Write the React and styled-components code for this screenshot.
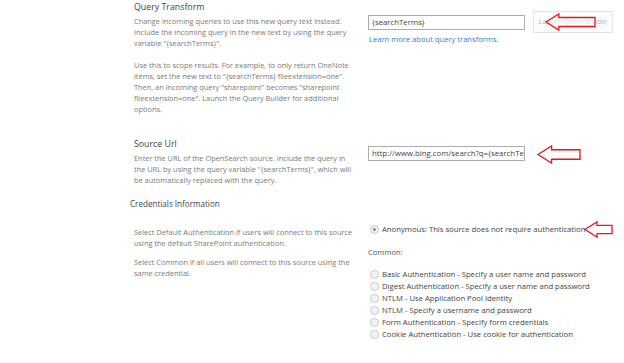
import React from "react";
import styled, { createGlobalStyle } from "styled-components";

const GlobalStyle = createGlobalStyle`
  html, body {
    margin: 0;
    padding: 0;
    background: #ffffff;
  }
  body {
    font-family: "Open Sans", "Noto Sans", "Liberation Sans", sans-serif;
  }
`;

const Page = styled.div`
  position: relative;
  width: 624px;
  height: 363px;
  overflow: hidden;
  padding-left: 130px;
  box-sizing: border-box;
`;

const Section = styled.div`
  display: flex;
  padding-top: ${(p) => p.$top || 0}px;
`;

const Left = styled.div`
  width: 238px;
  padding-left: 4px;
  padding-right: 10px;
  padding-top: ${(p) => p.$top || 0}px;
  box-sizing: border-box;
  flex-shrink: 0;
`;

const Right = styled.div`
  padding-top: ${(p) => p.$top || 0}px;
  display: flex;
  flex-direction: column;
`;

const Heading = styled.div`
  font-size: ${(p) => p.$size || 8.8}px;
  line-height: 12px;
  color: #444444;
  margin-top: ${(p) => p.$mt || 0}px;
  margin-bottom: ${(p) => p.$gap || 3}px;
`;

const Desc = styled.p`
  margin: 0 0 ${(p) => p.$gap ?? 11}px 0;
  font-size: 7.4px;
  line-height: ${(p) => p.$lh || 11}px;
  color: #7a7a7a;
`;

const InputRow = styled.div`
  display: flex;
  align-items: center;
  gap: 8px;
`;

const TextBox = styled.div`
  width: 157px;
  height: 15px;
  box-sizing: border-box;
  border: 1px solid #ababab;
  font-size: 7.8px;
  line-height: 13px;
  padding: 0 3px;
  color: #444444;
  white-space: nowrap;
  overflow: hidden;
`;

const Button = styled.div`
  width: 80px;
  height: 22px;
  box-sizing: border-box;
  border: 1px solid #e3e3e3;
  background: #fdfdfd;
  font-size: 6.8px;
  line-height: 20px;
  text-align: center;
  color: #b8b8b8;
`;

const Link = styled.div`
  font-size: 7.6px;
  line-height: 11px;
  color: #2d7fc4;
  margin-top: 1px;
  padding-left: 1px;
`;

const RadioRow = styled.label`
  display: flex;
  align-items: center;
  gap: 3px;
  height: 12px;
  font-size: 7.7px;
  color: #444444;
  padding-left: 2px;
  white-space: nowrap;
`;

const Radio = styled.span`
  width: 7px;
  height: 7px;
  border-radius: 50%;
  border: 1px solid #c8c8c8;
  background: #f3f3f3;
  display: inline-flex;
  align-items: center;
  justify-content: center;
  flex-shrink: 0;
  &::after {
    content: "";
    width: 3px;
    height: 3px;
    border-radius: 50%;
    background: ${(p) => (p.$checked ? "#8a8a8a" : "transparent")};
  }
`;

const Common = styled.div`
  font-size: 7.6px;
  line-height: 12px;
  color: #555555;
  margin: 11px 0 10px 0;
`;

const Arrow = styled.svg`
  position: absolute;
  left: ${(p) => p.$x}px;
  top: ${(p) => p.$y}px;
  overflow: visible;
`;

const RedArrow = ({ x, y, w, h }) => {
  const head = h * 0.8;
  const shaft = h * 0.28;
  const mid = h / 2;
  const points = [
    [0, mid],
    [head, 0],
    [head, mid - shaft],
    [w, mid - shaft],
    [w, mid + shaft],
    [head, mid + shaft],
    [head, h],
  ]
    .map((pt) => pt.join(","))
    .join(" ");
  return (
    <Arrow $x={x} $y={y} width={w} height={h} viewBox={`0 0 ${w} ${h}`}>
      <polygon points={points} fill="#ffffff" fillOpacity="0.6" stroke="#e8141b" strokeWidth="1.3" />
    </Arrow>
  );
};

const authOptions = [
  "Basic Authentication - Specify a user name and password",
  "Digest Authentication - Specify a user name and password",
  "NTLM - Use Application Pool Identity",
  "NTLM - Specify a username and password",
  "Form Authentication - Specify form credentials",
  "Cookie Authentication - Use cookie for authentication",
];

const App = () => {
  return (
    <>
      <GlobalStyle />
      <Page>
        <Section $top={1}>
          <Left>
            <Heading>Query Transform</Heading>
            <Desc>
              Change incoming queries to use this new query text instead.
              Include the incoming query in the new text by using the query
              variable "{"{searchTerms}"}".
            </Desc>
            <Desc>
              Use this to scope results. For example, to only return OneNote
              items, set the new text to "{"{searchTerms}"} fileextension=one".
              Then, an incoming query "sharepoint" becomes "sharepoint
              fileextension=one". Launch the Query Builder for additional
              options.
            </Desc>
          </Left>
          <Right $top={10}>
            <InputRow>
              <TextBox>{"{searchTerms}"}</TextBox>
              <Button>Launch Query Builder</Button>
            </InputRow>
            <Link>Learn more about query transforms.</Link>
          </Right>
        </Section>

        <Section $top={12}>
          <Left>
            <Heading>Source Url</Heading>
            <Desc $gap={0}>
              Enter the URL of the OpenSearch source. Include the query in the
              URL by using the query variable "{"{searchTerms}"}", which will
              be automatically replaced with the query.
            </Desc>
          </Left>
          <Right $top={8}>
            <TextBox>http://www.bing.com/search?q={"{searchTerms}"}</TextBox>
          </Right>
        </Section>

        <Heading $size={8.1} $mt={12} $gap={13}>
          Credentials Information
        </Heading>

        <Section>
          <Left $top={4}>
            <Desc $lh={10.5} $gap={9}>
              Select Default Authentication if users will connect to this source
              using the default SharePoint authentication.
            </Desc>
            <Desc $lh={10.5} $gap={0}>
              Select Common if all users will connect to this source using the
              same credential.
            </Desc>
          </Left>
          <Right>
            <RadioRow>
              <Radio $checked />
              Anonymous: This source does not require authentication
            </RadioRow>
            <Common>Common:</Common>
            {authOptions.map((label) => (
              <RadioRow key={label}>
                <Radio />
                {label}
              </RadioRow>
            ))}
          </Right>
        </Section>

        <RedArrow x={546} y={14} w={49} h={16} />
        <RedArrow x={538} y={146} w={42} h={17} />
        <RedArrow x={585} y={222} w={27} h={15} />
      </Page>
    </>
  );
};

export default App;
